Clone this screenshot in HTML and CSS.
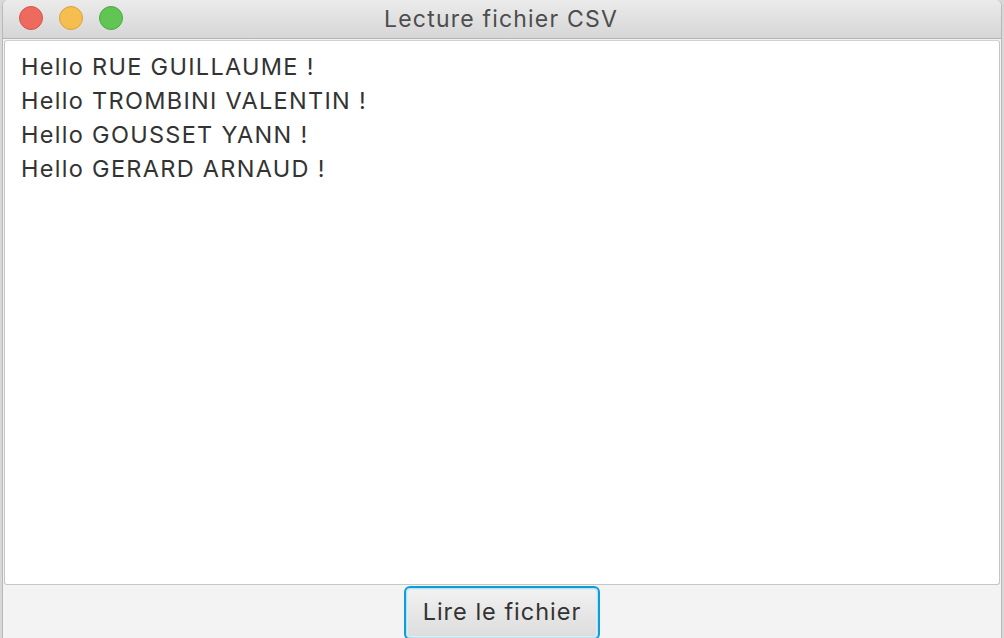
FILE: index.html
```html
<!DOCTYPE html>
<html lang="fr">
<head>
<meta charset="utf-8">
<title>Lecture fichier CSV</title>
<link rel="stylesheet" href="styles.css">
</head>
<body>
<div class="window">
  <div class="titlebar">
    <div class="lights">
      <span class="light red"></span>
      <span class="light yellow"></span>
      <span class="light green"></span>
    </div>
    <div class="title">Lecture fichier CSV</div>
  </div>
  <div class="content">
    <div class="textarea">
      <div class="line">Hello RUE GUILLAUME !</div>
      <div class="line">Hello TROMBINI VALENTIN !</div>
      <div class="line">Hello GOUSSET YANN !</div>
      <div class="line">Hello GERARD ARNAUD !</div>
    </div>
    <div class="footer">
      <button class="btn">Lire le fichier</button>
    </div>
  </div>
</div>
</body>
</html>
```
FILE: styles.css
```css
html, body {
  margin: 0;
  padding: 0;
  height: 100%;
  overflow: hidden;
  background: #d8d8d8;
}
body {
  font-family: Inter, "Liberation Sans", Arial, sans-serif;
}
.window {
  margin-left: 2px;
  width: 998px;
  height: 660px;
  display: flex;
  flex-direction: column;
  border-left: 1px solid #b8b8b8;
  border-right: 1px solid #b8b8b8;
  border-radius: 6px 6px 0 0;
  overflow: hidden;
  background: #f3f3f3;
}
.titlebar {
  position: relative;
  height: 38px;
  flex: none;
  background: linear-gradient(#ebebeb, #d6d6d6);
  border-bottom: 1px solid #b3b3b3;
  display: flex;
  align-items: center;
  justify-content: center;
}
.lights {
  position: absolute;
  left: 16px;
  top: 6px;
  display: flex;
  gap: 16px;
}
.light {
  width: 22px;
  height: 22px;
  border-radius: 50%;
  display: block;
}
.red { background: #ee6a5f; border: 1px solid #d6544a; }
.yellow { background: #f5be4f; border: 1px solid #d9a23a; }
.green { background: #61c554; border: 1px solid #4ea842; }
.title {
  font-size: 23px;
  color: #4d4d4d;
  padding-right: 2px;
  letter-spacing: 1.2px;
}
.content {
  flex: 1;
  display: flex;
  flex-direction: column;
  padding: 1px 1px 0;
}
.textarea {
  height: 525px;
  flex: none;
  background: #fff;
  border: 1px solid #c6c6c6;
  border-top-color: #d0d0d0;
  border-radius: 3px;
  padding: 9px 16px;
  color: #333;
  font-size: 23.5px;
  line-height: 34px;
  letter-spacing: 1.3px;
}
.footer {
  display: flex;
  justify-content: center;
  padding-top: 1px;
}
.btn {
  width: 196px;
  height: 54px;
  border: 2px solid #109dd6;
  border-radius: 6px;
  box-shadow: inset 0 0 0 1px #b9e2f3, inset 0 0 0 2px #d8eef8;
  background: linear-gradient(#f2f2f2, #dcdcdc);
  font-family: Inter, "Liberation Sans", Arial, sans-serif;
  font-size: 23.5px;
  letter-spacing: 1px;
  color: #333;
  padding: 0 0 3px;
}
```
